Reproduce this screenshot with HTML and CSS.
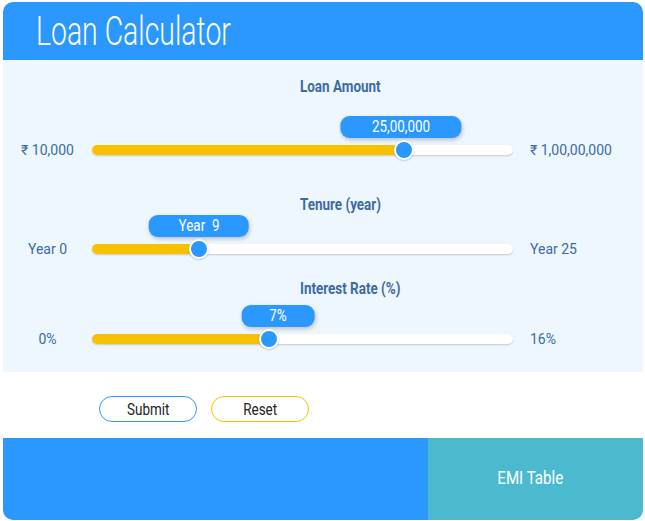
FILE: index.html
```html
<!DOCTYPE html>
<html lang="en">
<head>
  <meta charset="UTF-8">
  <title>Loan Calculator</title>
  <meta name="viewport" content="width=device-width, initial-scale=1.0">
  <link rel="stylesheet" href="styles.css">
</head>
<body>
  <div class="calc">
    <header class="calc-head">
      <h1><span class="narrow">Loan Calculator</span></h1>
    </header>

    <section class="calc-body">
      <div class="field field-loan">
        <h2><span class="narrow">Loan Amount</span></h2>
        <div class="slider-row">
          <span class="min">₹ 10,000</span>
          <div class="track">
            <div class="fill" style="width: 74%"></div>
            <span class="bubble" style="left: 73.4%"><span class="narrow">25,00,000</span></span>
            <span class="thumb" style="left: 74%"></span>
          </div>
          <span class="max">₹ 1,00,00,000</span>
        </div>
      </div>

      <div class="field field-tenure">
        <h2><span class="narrow">Tenure (year)</span></h2>
        <div class="slider-row">
          <span class="min">Year 0</span>
          <div class="track">
            <div class="fill" style="width: 25.4%"></div>
            <span class="bubble" style="left: 25.3%"><span class="narrow">Year&nbsp;&nbsp;9</span></span>
            <span class="thumb" style="left: 25.4%"></span>
          </div>
          <span class="max">Year 25</span>
        </div>
      </div>

      <div class="field field-rate">
        <h2><span class="narrow">Interest Rate (%)</span></h2>
        <div class="slider-row">
          <span class="min">0%</span>
          <div class="track">
            <div class="fill" style="width: 42%"></div>
            <span class="bubble" style="left: 44.2%"><span class="narrow">7%</span></span>
            <span class="thumb" style="left: 42%"></span>
          </div>
          <span class="max">16%</span>
        </div>
      </div>
    </section>

    <div class="actions">
      <button class="btn btn-submit"><span class="narrow">Submit</span></button>
      <button class="btn btn-reset"><span class="narrow">Reset</span></button>
    </div>

    <footer class="calc-foot">
      <div class="result"></div>
      <div class="emi"><span class="narrow">EMI Table</span></div>
    </footer>
  </div>
</body>
</html>
```

FILE: styles.css
```css
body {
  margin: 0;
  padding: 2px 2px 1px 3px;
  background: #fff;
  font-family: "Roboto", sans-serif;
}

.calc {
  width: 640px;
  border-radius: 10px;
  overflow: hidden;
}

.narrow {
  display: inline-block;
  transform: scaleX(0.84);
}

.calc-head {
  background: #2a98fe;
  height: 58px;
  padding-left: 33px;
  box-sizing: border-box;
}

h1 {
  margin: 0;
  color: #fff;
  font-weight: 300;
  font-size: 40px;
  line-height: 60px;
}

h1 .narrow {
  transform: scaleX(0.71);
  transform-origin: left center;
}

.calc-body {
  background: #eef6fe;
  padding: 16px 0 23px;
}

h2 {
  margin: 0;
  padding: 1px 0 0 297px;
  font-size: 16px;
  line-height: 20px;
  font-weight: bold;
  color: #3c6ca3;
}

h2 .narrow {
  transform-origin: left center;
}

.slider-row {
  display: grid;
  grid-template-columns: 89px 421px 1fr;
  align-items: center;
  height: 20px;
  color: #3c6ca3;
  font-size: 14px;
}

.min {
  text-align: center;
}

.max {
  padding-left: 17px;
}

.field-loan .slider-row {
  margin-top: 43px;
}

.field-tenure {
  margin-top: 34px;
}

.field-tenure .slider-row {
  margin-top: 24px;
}

.field-rate {
  margin-top: 19px;
}

.field-rate .slider-row {
  margin-top: 30px;
}

.track {
  position: relative;
  height: 10px;
  border-radius: 5px;
  background: #fff;
  box-shadow: 0 1px 2px rgba(0, 0, 0, 0.18);
}

.fill {
  height: 100%;
  border-radius: 5px;
  background: #f7c100;
}

.thumb {
  position: absolute;
  top: 50%;
  width: 16px;
  height: 16px;
  border: 2px solid #fff;
  border-radius: 50%;
  background: #2a98fe;
  transform: translate(-50%, -50%);
  box-shadow: 0 1px 2px rgba(0, 0, 0, 0.2);
}

.bubble {
  position: absolute;
  bottom: 17px;
  transform: translateX(-50%);
  padding: 0 26px;
  height: 22px;
  line-height: 22px;
  border-radius: 9px;
  background: #2a98fe;
  color: #fff;
  font-size: 16px;
  white-space: nowrap;
  box-shadow: 1px 2px 4px rgba(0, 0, 0, 0.22);
}

.actions {
  background: #fff;
  height: 66px;
  padding: 24px 0 0 96px;
  box-sizing: border-box;
  display: flex;
  gap: 14px;
}

.btn {
  width: 98px;
  height: 26px;
  border-radius: 13px;
  background: #fff;
  color: #222;
  font-size: 16px;
  font-family: "Roboto", sans-serif;
  padding: 0;
}

.btn-submit {
  border: 1px solid #2a98fe;
}

.btn-reset {
  border: 1px solid #f7c100;
}

.calc-foot {
  display: flex;
  height: 82px;
}

.result {
  flex: 1;
  background: #2a98fe;
}

.emi {
  width: 215px;
  background: #4bbace;
  color: #fff;
  font-size: 18px;
  display: flex;
  align-items: center;
  justify-content: center;
  padding: 0 11px 3px 0;
  box-sizing: border-box;
}
```
